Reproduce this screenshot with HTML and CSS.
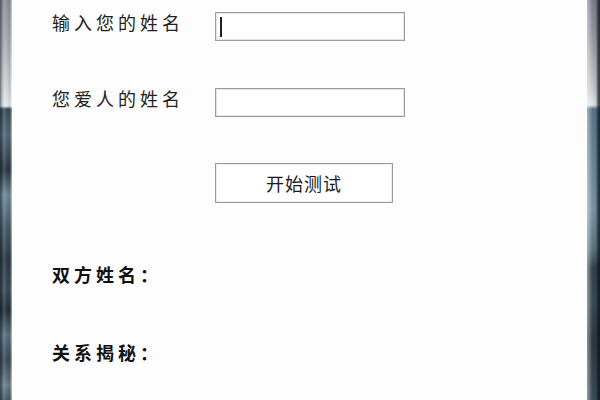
FILE: index.html
```html
<!DOCTYPE html>
<html lang="zh-CN">
<head>
<meta charset="utf-8">
<title>姓名测试</title>
<link rel="stylesheet" href="styles.css">
</head>
<body>
<div class="window">
  <div class="frame frame-left"></div>
  <main class="content">
    <div class="row row-first">
      <label class="label">输入您的姓名</label>
      <div class="field"><span class="caret"></span></div>
    </div>
    <div class="row row-second">
      <label class="label">您爱人的姓名</label>
      <div class="field"></div>
    </div>
    <div class="row row-button">
      <span class="spacer"></span>
      <button class="btn" type="button">开始测试</button>
    </div>
    <div class="result result-names">双方姓名：</div>
    <div class="result result-secret">关系揭秘：</div>
  </main>
  <div class="frame frame-right"></div>
</div>
</body>
</html>
```

FILE: styles.css
```css
html, body {
  margin: 0;
  padding: 0;
  width: 600px;
  height: 400px;
  overflow: hidden;
  background: #fdfdfd;
}

.window {
  display: flex;
  width: 600px;
  height: 400px;
}

.frame {
  flex: none;
  height: 400px;
}

.frame-left {
  width: 12px;
  background:
    linear-gradient(to right, rgba(20,28,36,0.55) 0, rgba(20,28,36,0.2) 2px, rgba(255,255,255,0.15) 4px, rgba(255,255,255,0) 7px, rgba(0,0,0,0.1) 10px, rgba(255,255,255,0.35) 11px, rgba(255,255,255,0.5) 12px),
    linear-gradient(to bottom, #8c9298 0, #a4aab0 40px, #c8cdd1 80px, #e4e7e9 106px, #3c4c58 109px, #56697a 135px, #2a3843 170px, #708a98 195px, #4a5e6c 225px, #2c3a46 260px, #3a4c58 290px, #23313b 310px, #5c7080 335px, #3a4a56 360px, #6a7e8a 385px, #4a5a66 400px);
}

.frame-right {
  width: 13px;
  background:
    linear-gradient(to right, rgba(255,255,255,0.45) 0, rgba(255,255,255,0.2) 3px, rgba(0,0,0,0) 5px, rgba(0,0,0,0.1) 9px, rgba(10,16,24,0.65) 11px, rgba(10,16,24,0.8) 13px),
    linear-gradient(to bottom, #7e8288 0, #9a9ea4 40px, #c4c8cc 85px, #e2e6e8 105px, #58788a 109px, #6a8a98 160px, #7c98a6 210px, #5e7682 250px, #34444e 268px, #3c4e58 300px, #2c3a44 340px, #3c4e5a 400px);
}

.content {
  flex: 1;
  background: #fdfdfd;
  padding: 12px 0 0 40px;
  font-family: "Noto Sans CJK SC", "Noto Sans", sans-serif;
  color: #222222;
}

.row {
  display: grid;
  grid-template-columns: 163px auto;
  align-items: start;
}

.row-second {
  margin-top: 47px;
}

.row-button {
  margin-top: 46px;
}

.label {
  font-size: 18px;
  line-height: 20px;
  letter-spacing: 4px;
  color: #222222;
  white-space: nowrap;
}

.field {
  width: 184px;
  height: 27px;
  border: 1px solid #9c9c9c;
  box-shadow: inset 0 0 0 1px #e4e4e4;
  background: #ffffff;
  display: flex;
  align-items: center;
  padding-left: 4px;
  box-sizing: content-box;
}

.field .caret {
  display: block;
  width: 2px;
  height: 20px;
  background: #1e1e1e;
}

.btn {
  width: 178px;
  height: 40px;
  border: 1px solid #9a9a9a;
  box-shadow: inset 0 0 0 1px #ececec;
  background: #ffffff;
  font-family: "Noto Sans CJK SC", "Noto Sans", sans-serif;
  font-size: 18px;
  letter-spacing: 1px;
  color: #1a1a1a;
  padding: 0;
  box-sizing: border-box;
}

.result {
  font-size: 18px;
  line-height: 20px;
  font-weight: bold;
  letter-spacing: 4px;
  color: #111111;
}

.result-names {
  margin-top: 61px;
}

.result-secret {
  margin-top: 58px;
}
```
